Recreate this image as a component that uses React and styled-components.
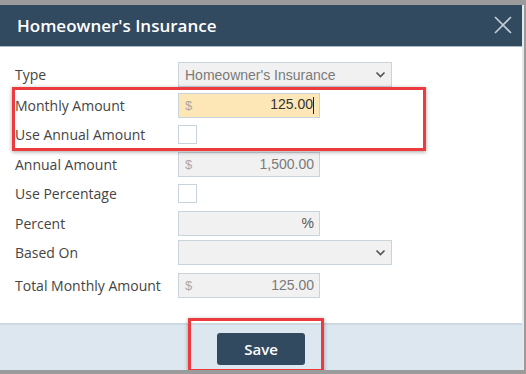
import styled, { createGlobalStyle } from "styled-components";

const GlobalStyle = createGlobalStyle`
  html, body {
    margin: 0;
    padding: 0;
    background: #9b9b9b;
  }
  * {
    box-sizing: border-box;
  }
`;

const Dialog = styled.div`
  margin-top: 5px;
  width: 524px;
  height: 365px;
  background: #ffffff;
  border-right: 2px solid #e4e9ee;
  display: flex;
  flex-direction: column;
`;

const Header = styled.header`
  height: 42px;
  background: #324a5f;
  border-bottom: 1px solid #aab8c4;
  display: flex;
  align-items: center;
  justify-content: space-between;
  padding: 0 7px 1px 17px;
  color: #ffffff;
  font-family: "Open Sans", sans-serif;
  font-weight: 600;
  font-size: 17px;
`;

const CloseButton = styled.button`
  background: transparent;
  border: none;
  padding: 0;
  width: 24px;
  height: 24px;
  display: flex;
  align-items: center;
  justify-content: center;
  cursor: pointer;
`;

const Form = styled.div`
  position: relative;
  flex: 1;
  padding: 13px 0 0 15px;
  font-family: "Open Sans", sans-serif;
`;

const Row = styled.div`
  height: 29.5px;
  display: flex;
  align-items: center;
  margin-top: ${({ $gap }) => $gap || 0}px;
`;

const Label = styled.span`
  width: 163px;
  font-size: 14px;
  color: #444444;
`;

const Field = styled.div`
  width: ${({ $wide }) => ($wide ? 214 : 142)}px;
  height: 25px;
  border: 1px solid #c9d3db;
  background: ${({ $active }) => ($active ? "#fde7b7" : "#f1f1f1")};
  display: flex;
  align-items: center;
  justify-content: space-between;
  padding: 0 5px 0 6px;
  font-family: "Liberation Sans", Arial, sans-serif;
  font-size: 14px;
  color: ${({ $active }) => ($active ? "#333333" : "#7a7a7a")};
`;

const Prefix = styled.span`
  color: #a9a9a9;
  font-size: 13px;
`;

const Value = styled.span`
  margin-left: auto;
  color: ${({ $strong }) => ($strong ? "#555555" : "inherit")};
`;

const Caret = styled.span`
  display: inline-block;
  width: 1px;
  height: 17px;
  background: #222;
  vertical-align: middle;
`;

const Checkbox = styled.div`
  width: 19px;
  height: 19px;
  border: 1px solid #c9d3db;
  background: #ffffff;
`;

const Highlight = styled.div`
  position: absolute;
  border: 3px solid #ec3b3f;
  box-shadow: 0 1px 4px rgba(0, 0, 0, 0.35);
  pointer-events: none;
`;

const Footer = styled.footer`
  position: relative;
  height: 47px;
  background: #dde7ef;
  border-top: 2px solid #cfd9e2;
  display: flex;
  align-items: center;
  justify-content: center;
`;

const SaveButton = styled.button`
  width: 88px;
  height: 32px;
  margin-top: 2px;
  border: none;
  border-radius: 3px;
  background: #324a5f;
  color: #ffffff;
  font-family: "Open Sans", sans-serif;
  font-weight: 600;
  font-size: 15px;
  cursor: pointer;
`;

const Chevron = () => (
  <svg width="11" height="7" viewBox="0 0 11 7">
    <path d="M1.5 1.5 5.5 5.5l4-4" fill="none" stroke="#555" strokeWidth="1.7" />
  </svg>
);

const App = () => {
  return (
    <>
      <GlobalStyle />
      <Dialog>
        <Header>
          <span>Homeowner's Insurance</span>
          <CloseButton aria-label="Close">
            <svg width="20" height="20" viewBox="0 0 20 20">
              <path d="M2 2l16 16M18 2L2 18" stroke="#c5ced7" strokeWidth="1.6" />
            </svg>
          </CloseButton>
        </Header>
        <Form>
          <Row>
            <Label>Type</Label>
            <Field $wide>
              <span>Homeowner's Insurance</span>
              <Chevron />
            </Field>
          </Row>
          <Row $gap={1}>
            <Label>Monthly Amount</Label>
            <Field $active>
              <Prefix>$</Prefix>
              <Value>
                125.00
                <Caret />
              </Value>
            </Field>
          </Row>
          <Row>
            <Label>Use Annual Amount</Label>
            <Checkbox />
          </Row>
          <Row>
            <Label>Annual Amount</Label>
            <Field>
              <Prefix>$</Prefix>
              <Value>1,500.00</Value>
            </Field>
          </Row>
          <Row>
            <Label>Use Percentage</Label>
            <Checkbox />
          </Row>
          <Row>
            <Label>Percent</Label>
            <Field>
              <Value $strong>%</Value>
            </Field>
          </Row>
          <Row>
            <Label>Based On</Label>
            <Field $wide>
              <span />
              <Chevron />
            </Field>
          </Row>
          <Row $gap={3}>
            <Label>Total Monthly Amount</Label>
            <Field>
              <Prefix>$</Prefix>
              <Value>125.00</Value>
            </Field>
          </Row>
          <Highlight style={{ left: 12, top: 40, width: 414, height: 64 }} />
        </Form>
        <Footer>
          <SaveButton>Save</SaveButton>
          <Highlight style={{ left: 188, top: -7, width: 136, height: 54 }} />
        </Footer>
      </Dialog>
    </>
  );
};

export default App;
